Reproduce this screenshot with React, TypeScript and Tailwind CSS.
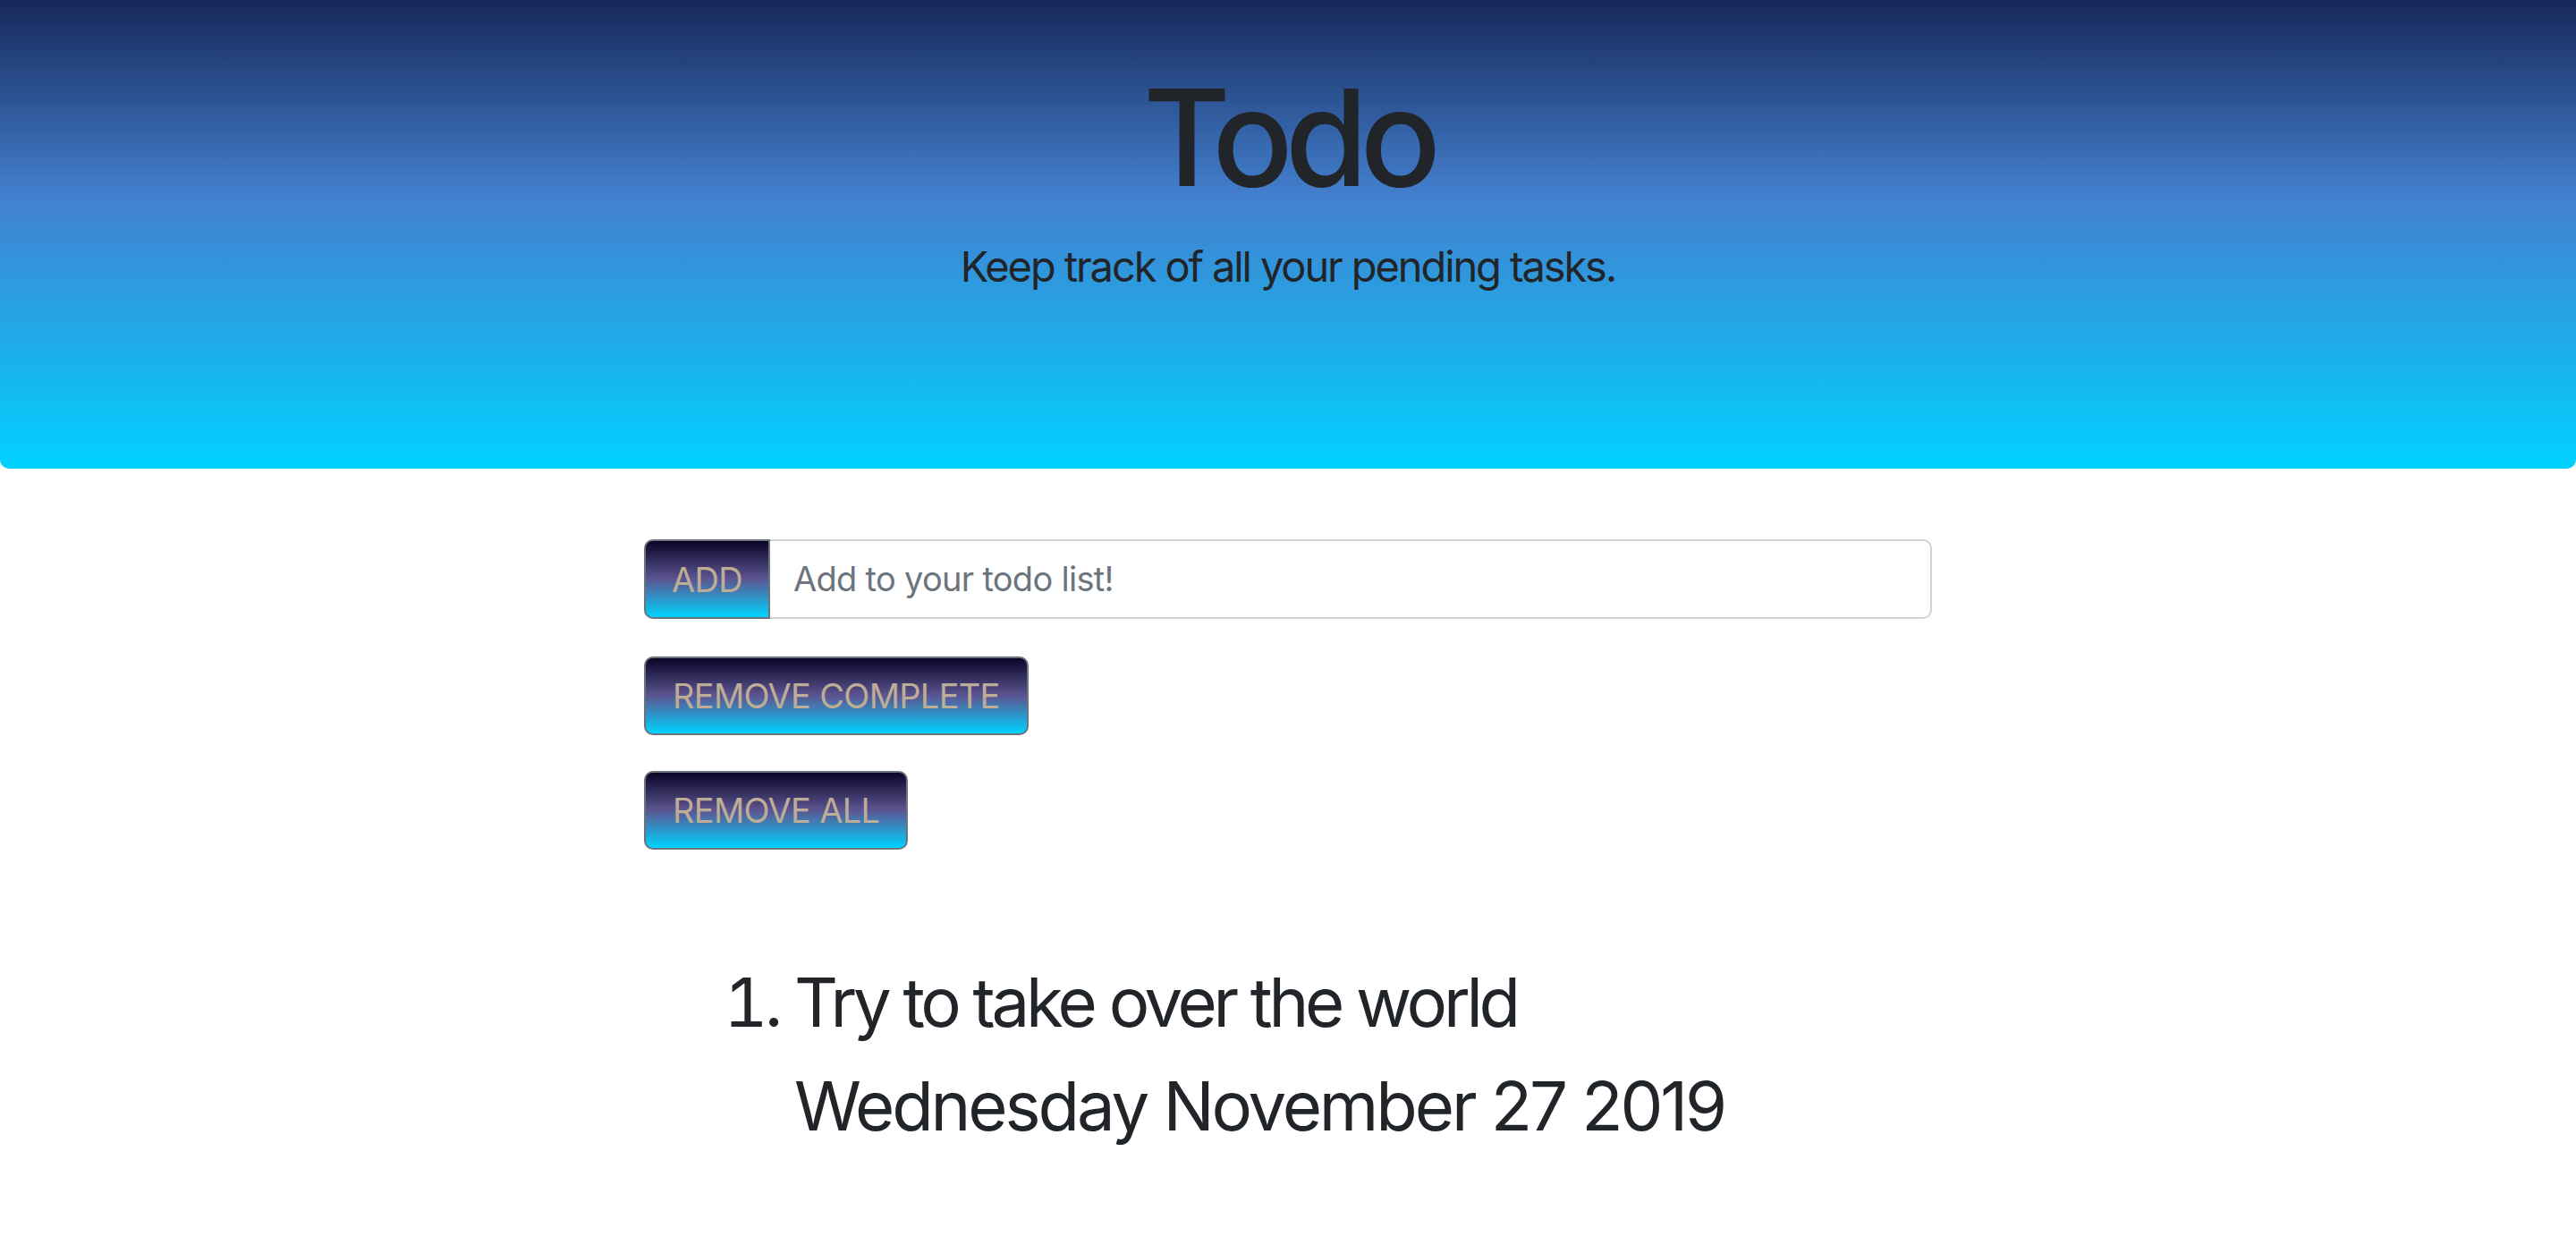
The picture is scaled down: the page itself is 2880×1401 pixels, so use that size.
import { useState } from "react";

interface Todo {
  text: string;
  date: string;
  done: boolean;
}

const btnClass =
  "rounded-[10px] border-2 border-[#6c757d] bg-[linear-gradient(#0a0527_0%,#5c5591_50%,#00d3ff_100%)] px-[30px] py-[13px] text-[38px] leading-[58px] tracking-[-0.7px] text-[#bdac96]";

export default function App() {
  const [todos] = useState<Todo[]>([
    { text: "Try to take over the world", date: "Wednesday November 27 2019", done: false },
  ]);

  return (
    <div className="min-h-screen bg-white font-['Inter',sans-serif] text-[#212529]">
      {/* Jumbotron */}
      <div className="h-[524px] rounded-b-[10px] bg-[linear-gradient(#162859_0%,#4380cf_42%,#00d2ff_100%)] pt-[64px] text-center">
        <h1 className="text-[150px] leading-[180px] font-medium tracking-[-9px]">Todo</h1>
        <p className="mt-[19px] text-[47px] leading-[70px] tracking-[-2.1px]">Keep track of all your pending tasks.</p>
      </div>

      <div className="mx-auto w-[1440px] pt-[79px]">
        {/* Add input group */}
        <div className="flex h-[89px]">
          <button className="rounded-l-[10px] border-2 border-[#6c757d] bg-[linear-gradient(#0a0527_0%,#5c5591_50%,#00d3ff_100%)] px-[29px] text-[38px] leading-[58px] tracking-[-0.7px] text-[#bdac96]">
            ADD
          </button>
          <input
            className="flex-1 rounded-r-[10px] border-2 border-l-0 border-[#ced4da] px-[26px] text-[38px] tracking-[-0.7px] text-[#495057] outline-none placeholder:text-[#6c757d]"
            placeholder="Add to your todo list!"
          />
        </div>

        <div className="mt-[42px]">
          <button className={btnClass}>REMOVE COMPLETE</button>
        </div>
        <div className="mt-[40px]">
          <button className={btnClass}>REMOVE ALL</button>
        </div>

        {/* Todo list */}
        <ol className="mt-[112px] list-decimal pl-[168px] text-[76px] leading-[116px] tracking-[-3.8px]">
          {todos.map((todo) => (
            <li key={todo.text}>
              <div className="tracking-[-4.3px]">{todo.text}</div>
              <div className="tracking-[-3.1px]">{todo.date}</div>
            </li>
          ))}
        </ol>
      </div>
    </div>
  );
}
